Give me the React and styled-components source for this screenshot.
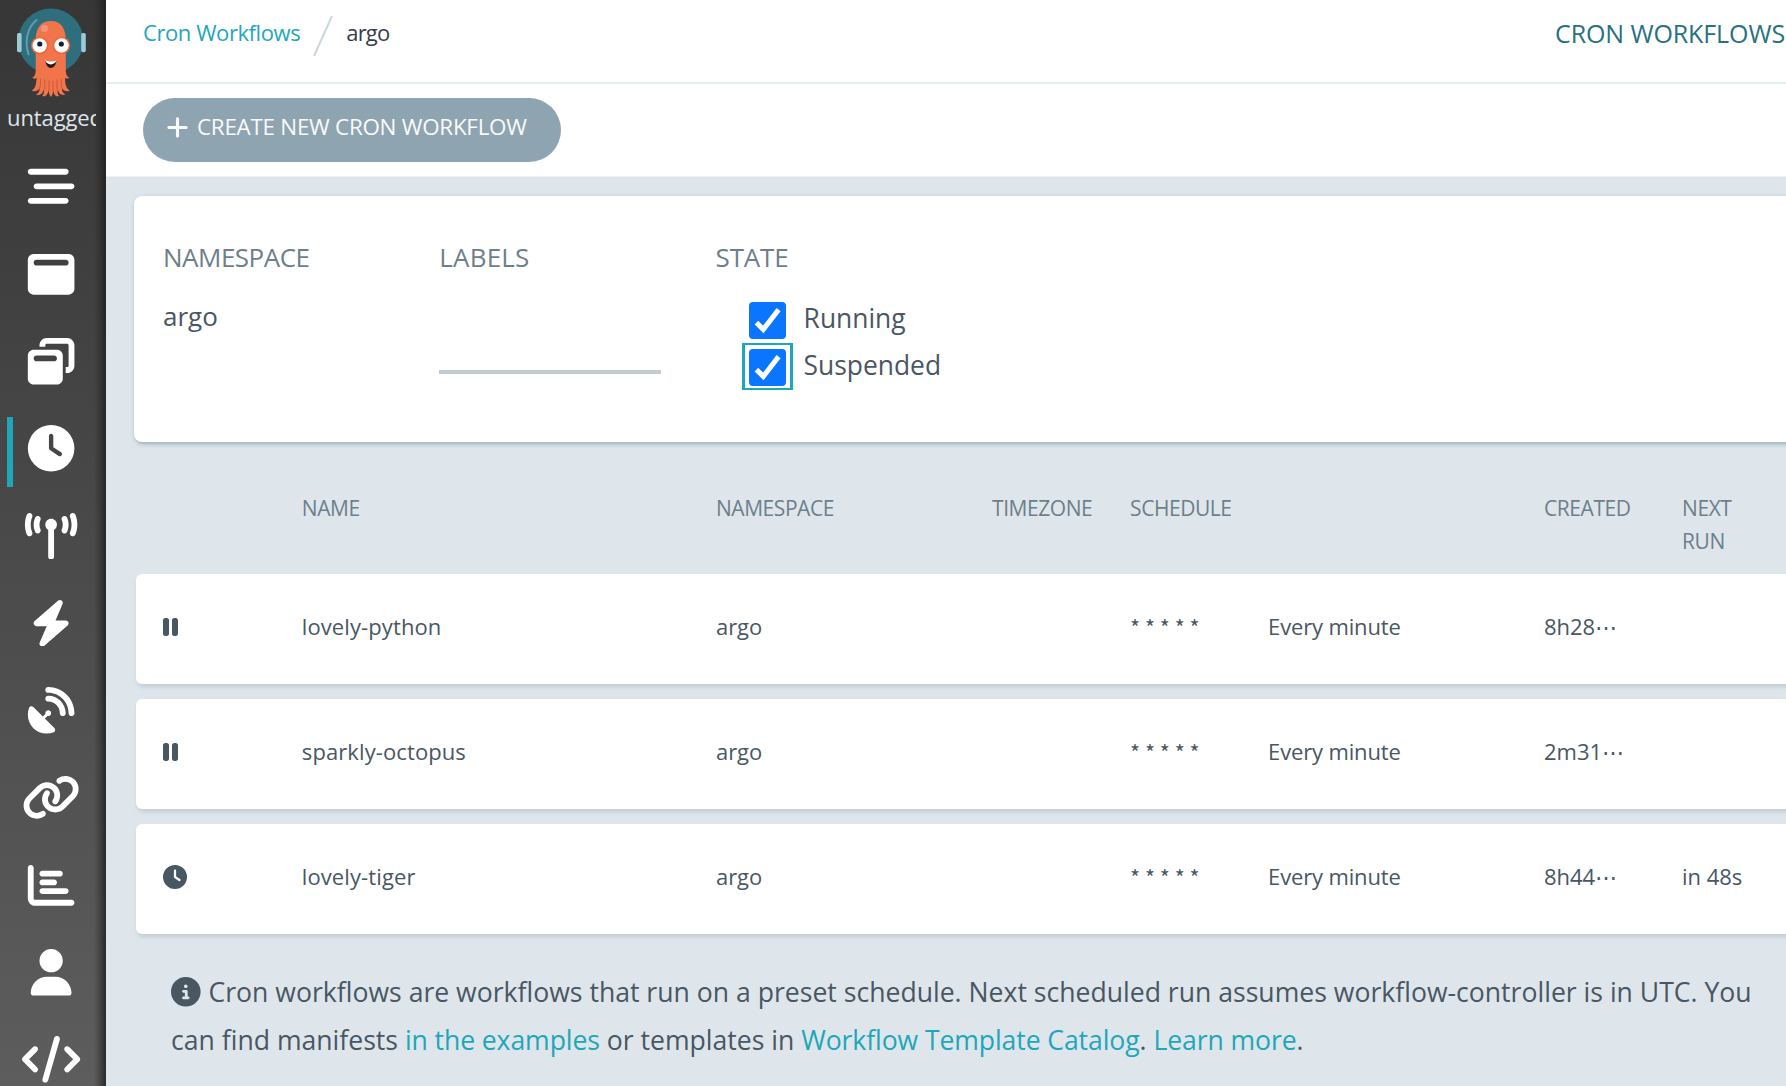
import React from 'react';
import styled, { createGlobalStyle, css } from 'styled-components';
import {
  FaBarsStaggered,
  FaWindowMaximize,
  FaWindowRestore,
  FaClock,
  FaTowerBroadcast,
  FaBolt,
  FaSatelliteDish,
  FaLink,
  FaChartBar,
  FaUser,
  FaCode,
  FaPause,
  FaPlus,
  FaCircleInfo,
} from 'react-icons/fa6';

const teal = '#1fa7b9';
const ink = '#495763';
const muted = '#6d7f8b';

const GlobalStyle = createGlobalStyle`
  * { box-sizing: border-box; }
  body {
    margin: 0;
    overflow: hidden;
    background: #dee6ec;
    font-family: 'Open Sans', 'Noto Sans', sans-serif;
    color: ${ink};
  }
`;

const Page = styled.div`
  display: flex;
  width: 1786px;
  height: 1086px;
  overflow: hidden;
`;

const Sidebar = styled.nav`
  flex: 0 0 106px;
  height: 1086px;
  overflow: hidden;
  background:
    linear-gradient(to right, rgba(30, 30, 30, 0) 94px, rgba(30, 30, 30, 0.35) 100px, rgba(30, 30, 30, 0.75) 105px),
    linear-gradient(to bottom, #363636, #5d5d5d);
`;

const LogoBox = styled.div`
  height: 100px;
  svg { display: block; }
`;

const Version = styled.div`
  height: 43px;
  margin: 0 10px 0 7px;
  overflow: hidden;
  white-space: nowrap;
  color: #dee6ec;
  font-size: 22px;
  letter-spacing: -0.1px;
  line-height: 34px;
`;

const NavItem = styled.a`
  display: flex;
  align-items: center;
  height: 87.3px;
  color: #fff;
  svg {
    height: 46.6px;
    width: 58.25px;
    flex: none;
  }
`;

const NavMarker = styled.span`
  flex: 0 0 6px;
  height: 70px;
  margin: 7px 0 0 7px;
  background: ${(p) => (p.$active ? teal : 'transparent')};
`;

const NavGlyph = styled.span`
  flex: 0 0 77px;
  display: flex;
  justify-content: center;
`;

const Main = styled.main`
  flex: 0 0 1680px;
  overflow: hidden;
`;

const TopBar = styled.header`
  display: flex;
  align-items: flex-start;
  height: 84px;
  padding: 0 1px 0 37px;
  background: #fff;
  border-bottom: 2px solid #e8eff3;
  white-space: nowrap;
`;

const Crumb = styled.span`
  line-height: 65px;
  font-size: 22px;
  letter-spacing: ${(p) => (p.$current ? '-0.8px' : '-0.42px')};
  color: ${(p) => (p.$current ? '#363c4a' : teal)};
`;

const Slash = styled.svg`
  margin: 14px 13px 0 13px;
`;

const PageTitle = styled.h1`
  margin: 0 0 0 auto;
  line-height: 67px;
  font-size: 25px;
  font-weight: 400;
  letter-spacing: -0.1px;
  color: #28717f;
`;

const Toolbar = styled.div`
  height: 93px;
  padding: 14px 37px;
  background: #fff;
  border-bottom: 1px solid #eef3f5;
`;

const CreateButton = styled.button`
  display: flex;
  align-items: center;
  width: 418px;
  height: 64px;
  padding: 0 0 6px 22px;
  border: 0;
  border-radius: 32px;
  background: #8fa4b1;
  color: #f8fafb;
  font-family: inherit;
  font-size: 22.4px;
  line-height: 30px;
  letter-spacing: -0.26px;
  white-space: nowrap;
  svg { width: 25px; height: 25px; margin: 1px 7px 0 0; }
`;

const Content = styled.div`
  padding: 19px 0 0 28px;
`;

const Filters = styled.section`
  display: grid;
  grid-template-columns: repeat(6, 276.3px);
  width: 1716px;
  height: 246px;
  padding: 37px 29px 0;
  border-radius: 8px;
  background: #fff;
  box-shadow: 1px 2px 4px rgba(90, 120, 130, 0.5);
`;

const Filter = styled.div`
  padding-right: 55px;
`;

const FilterLabel = styled.p`
  margin: 0;
  line-height: 48px;
  font-size: 26px;
  letter-spacing: ${(p) => p.$spacing || '-0.5px'};
  color: ${muted};
`;

const FilterValue = styled.p`
  margin: 0;
  padding-top: 10px;
  line-height: 50px;
  font-size: 26px;
`;

const TagInput = styled.div`
  height: 93px;
  border-bottom: 4px solid #c0ccd2;
`;

const Options = styled.div`
  display: flex;
  flex-direction: column;
  padding: 15px 0 0 26px;
`;

const Option = styled.label`
  display: flex;
  align-items: center;
  height: 46.8px;
  font-size: 26.4px;
  line-height: 42px;
  white-space: nowrap;
`;

const OptionText = styled.span`
  margin: -2px 0 0 11px;
`;

const FocusFrame = styled.span`
  flex: none;
  display: flex;
  align-items: center;
  justify-content: center;
  width: 51px;
  height: 46.8px;
  border-style: solid;
  border-width: 2px 3px;
  border-color: ${(p) => (p.$focused ? teal : 'transparent')};
`;

const Check = styled.span`
  display: block;
  flex: none;
  width: 37px;
  height: 37px;
  margin-top: 2px;
  border-radius: 4px;
  background: #0a75ff;
  svg { display: block; }
`;

const columns = css`
  display: grid;
  grid-template-columns: 138.8px 414.2px 276.1px 138px 138px 276px 138px 138px;
  width: 1712px;
  margin-left: 2px;
  padding-left: 27px;
`;

const TableHead = styled.div`
  ${columns}
  height: 132px;
  padding-top: 50px;
  line-height: 33px;
  font-size: 21px;
  letter-spacing: -0.45px;
  color: ${muted};
`;

const HeadCell = styled.span`
  padding-right: 60px;
  white-space: ${(p) => (p.$wrap ? 'normal' : 'nowrap')};
`;

const Row = styled.div`
  ${columns}
  align-items: center;
  height: 110px;
  margin-bottom: 15px;
  padding-bottom: 6px;
  border-radius: 6px;
  background: #fff;
  box-shadow: 1px 3px 4px #c3ced2;
  font-size: 22px;
  white-space: nowrap;
  svg { display: block; height: 24px; width: 24px; margin-top: 1.5px; }
`;

const Cell = styled.span`
  letter-spacing: ${(p) => p.$spacing || '-0.05px'};
`;

const Cron = styled.span`
  margin-top: 2px;
  font-family: 'Noto Sans CJK SC', sans-serif;
  font-size: 21.5px;
  line-height: 30px;
`;

const Info = styled.p`
  margin: 0;
  padding: 20px 0 0 37px;
  line-height: 47.7px;
  font-size: 26.6px;
  white-space: nowrap;
  svg { width: 29.6px; height: 29.6px; vertical-align: -5px; margin-right: 1px; }
`;

const Link = styled.a`
  letter-spacing: -0.1px;
  color: ${teal};
`;

function Logo() {
  return (
    <svg width="104" height="100" viewBox="0 0 104 100">
      <circle cx="50.8" cy="41" r="32.5" fill="#2f6e7d" />
      <path d="M36.5 20 C27 28 24.5 41 28.5 54.5" fill="none" stroke="#5f9dab" strokeWidth="2" strokeLinecap="round" />
      <rect x="17" y="33" width="4.6" height="19.2" rx="1.6" fill="#9ccbd5" />
      <rect x="81.2" y="33" width="4.6" height="19.2" rx="1.6" fill="#9ccbd5" />
      <path
        d="M35.7 40 C35.7 28 41 21 50.8 21 C60.5 21 65.8 28 65.8 40 V70 C65.8 74 67 77 69.5 77.5 C68 79.2 66 78.6 65 78 C65.2 84 66 89 70 90.5 C67 92.3 63.6 91 62 88 C61.8 91 63 93.6 65.5 94.6 C61 96 58.3 93 57.6 89 C57.3 92.5 57.7 95 59.3 96 C55.5 97.5 53.6 94 53.2 90 C52.9 93 52.6 95.3 51 97 C49.2 95 48.8 92.5 48.5 90 C47.9 94 46 97.5 42 96 C44 94.6 44.2 92 43.8 89 C43 93.5 40 96.2 35.8 94.6 C38.6 93.6 39.8 91 39.6 88 C38 91 34.6 92.3 31.5 90.5 C35.5 89 36.3 84 36.6 78 C35.3 78.9 33.5 79 32.2 77.5 C34.5 77 35.7 74 35.7 70 Z"
        fill="#f0754b"
      />
      <g stroke="#c94f2c" strokeWidth="0.8" fill="none" strokeLinecap="round">
        <path d="M40.5 79 Q41 85 39.8 88" />
        <path d="M44.8 80 V89" />
        <path d="M49 81 V90" />
        <path d="M53 81 V90" />
        <path d="M57 80 V89" />
        <path d="M61.3 79 Q60.8 85 61.8 88" />
      </g>
      <circle cx="44.5" cy="28.5" r="3.6" fill="#f5917b" />
      <circle cx="39.7" cy="45.5" r="8.7" fill="#f0653a" />
      <circle cx="61.5" cy="45.5" r="8.7" fill="#f0653a" />
      <circle cx="39.7" cy="45.5" r="7.2" fill="#fff" />
      <circle cx="61.5" cy="45.5" r="7.2" fill="#fff" />
      <circle cx="39.8" cy="44" r="2.6" fill="#14212a" />
      <circle cx="61.3" cy="44" r="2.6" fill="#14212a" />
      <path d="M45.3 61 Q51 63 56.5 61 Q55.2 68 50.8 68 Q46.5 68 45.3 61 Z" fill="#2a1a1c" />
      <path d="M45.3 60.6 Q51 62.6 56.5 60.6 Q54.8 64.4 50.8 64.4 Q46.8 64.4 45.3 60.6 Z" fill="#fff" />
    </svg>
  );
}

function Checkbox({ focused }) {
  return (
    <FocusFrame $focused={focused}>
      <Check>
        <svg width="37" height="37" viewBox="0 0 37 37">
          <path d="M7.4 20.6 L14.3 27.4 L29.6 7.6" fill="none" stroke="#fff" strokeWidth="5" />
        </svg>
      </Check>
    </FocusFrame>
  );
}

const navIcons = [
  FaBarsStaggered,
  FaWindowMaximize,
  FaWindowRestore,
  FaClock,
  FaTowerBroadcast,
  FaBolt,
  FaSatelliteDish,
  FaLink,
  FaChartBar,
  FaUser,
  FaCode,
];

const heads = ['', 'NAME', 'NAMESPACE', 'TIMEZONE', 'SCHEDULE', '', 'CREATED', 'NEXT RUN'];

const rows = [
  { icon: FaPause, name: 'lovely-python', created: '8h28⋯', next: '' },
  { icon: FaPause, name: 'sparkly-octopus', created: '2m31⋯', next: '' },
  { icon: FaClock, name: 'lovely-tiger', created: '8h44⋯', next: 'in 48s' },
];

export default function App() {
  return (
    <>
      <GlobalStyle />
      <Page>
        <Sidebar>
          <LogoBox>
            <Logo />
          </LogoBox>
          <Version>untagged</Version>
          {navIcons.map((Icon, i) => (
            <NavItem key={i}>
              <NavMarker $active={Icon === FaClock} />
              <NavGlyph>
                <Icon />
              </NavGlyph>
            </NavItem>
          ))}
        </Sidebar>
        <Main>
          <TopBar>
            <Crumb>Cron Workflows</Crumb>
            <Slash width="20" height="44" viewBox="0 0 20 44">
              <path d="M1 42 L19 2" stroke="#ccd6dd" strokeWidth="2" fill="none" />
            </Slash>
            <Crumb $current>argo</Crumb>
            <PageTitle>CRON WORKFLOWS</PageTitle>
          </TopBar>
          <Toolbar>
            <CreateButton>
              <FaPlus />
              CREATE NEW CRON WORKFLOW
            </CreateButton>
          </Toolbar>
          <Content>
            <Filters>
              <Filter>
                <FilterLabel>NAMESPACE</FilterLabel>
                <FilterValue>argo</FilterValue>
              </Filter>
              <Filter>
                <FilterLabel $spacing="0.2px">LABELS</FilterLabel>
                <TagInput />
              </Filter>
              <Filter>
                <FilterLabel $spacing="-0.2px">STATE</FilterLabel>
                <Options>
                  <Option>
                    <Checkbox />
                    <OptionText>Running</OptionText>
                  </Option>
                  <Option>
                    <Checkbox focused />
                    <OptionText>Suspended</OptionText>
                  </Option>
                </Options>
              </Filter>
            </Filters>
            <TableHead>
              {heads.map((h, i) => (
                <HeadCell key={i} $wrap={h === 'NEXT RUN'}>
                  {h}
                </HeadCell>
              ))}
            </TableHead>
            {rows.map((r) => (
              <Row key={r.name}>
                <Cell>
                  <r.icon preserveAspectRatio="xMinYMid" />
                </Cell>
                <Cell $spacing="0.1px">{r.name}</Cell>
                <Cell>argo</Cell>
                <Cell />
                <Cron>* * * * *</Cron>
                <Cell $spacing="-0.15px">Every minute</Cell>
                <Cell>{r.created}</Cell>
                <Cell>{r.next}</Cell>
              </Row>
            ))}
            <Info>
              <FaCircleInfo /> Cron workflows are workflows that run on a preset schedule. Next scheduled run assumes
              workflow-controller is in UTC. You
              <br />
              can find manifests <Link>in the examples</Link> or templates in <Link>Workflow Template Catalog</Link>.{' '}
              <Link>Learn more</Link>.
            </Info>
          </Content>
        </Main>
      </Page>
    </>
  );
}
